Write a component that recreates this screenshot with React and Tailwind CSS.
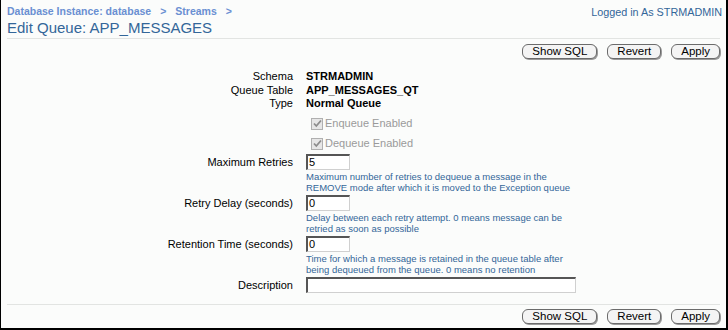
import React from 'react'

const FONT = { fontFamily: '"Liberation Sans", Arial, sans-serif' }

function Btn({ children }) {
  return (
    <button className="h-[15px] px-[9px] rounded-[6px] border border-[#6b6b6b] bg-[#f4f4f4] text-[11.5px] leading-[13px] text-black shadow-[1px_1px_0_#9a9a9a]">
      {children}
    </button>
  )
}

function Buttons() {
  return (
    <div className="flex justify-end gap-[10px] pr-[6px]">
      <Btn>Show SQL</Btn>
      <Btn>Revert</Btn>
      <Btn>Apply</Btn>
    </div>
  )
}

function Check({ label }) {
  return (
    <div className="flex items-center gap-[2px] h-[20px] pl-[5px]">
      <span className="w-[12px] h-[12px] border border-[#b0b0b0] bg-[#e6e6e6] flex items-center justify-center">
        <svg width="9" height="9" viewBox="0 0 9 9">
          <path d="M1 4.5 L3.3 7 L8 1.5" fill="none" stroke="#8c8c8c" strokeWidth="1.8" />
        </svg>
      </span>
      <span className="text-[11px] text-[#9a9a9a]">{label}</span>
    </div>
  )
}

function Input({ value, wide }) {
  return (
    <div
      className={`h-[16px] ${wide ? 'w-[270px]' : 'w-[44px]'} bg-white border-t-2 border-l-2 border-[#555] border-b border-r border-b-[#d0d0d0] border-r-[#d0d0d0] text-[11px] leading-[13px] pl-[1px] text-black`}
    >
      {value}
    </div>
  )
}

const FIELDS = [
  { label: 'Maximum Retries', value: '5', help: ['Maximum number of retries to dequeue a message in the', 'REMOVE mode after which it is moved to the Exception queue'] },
  { label: 'Retry Delay (seconds)', value: '0', help: ['Delay between each retry attempt. 0 means message can be', 'retried as soon as possible'] },
  { label: 'Retention Time (seconds)', value: '0', help: ['Time for which a message is retained in the queue table after', 'being dequeued from the queue. 0 means no retention'] },
]

export default function App() {
  return (
    <div style={FONT} className="w-[728px] h-[330px] bg-[#fbfcfb] border-l border-r-2 border-b-2 border-black flex flex-col overflow-hidden">
      {/* header */}
      <div className="flex justify-between items-start pl-[6px] pr-[4px] pt-[4px] h-[16px]">
        <div className="text-[10.5px] font-bold text-[#6a8fd2] flex gap-[9px]">
          <span>Database Instance: database</span>
          <span>&gt;</span>
          <span>Streams</span>
          <span>&gt;</span>
        </div>
        <div className="text-[10.8px] text-[#336699]">Logged in As STRMADMIN</div>
      </div>
      <div className="px-[6px] text-[15px] leading-[18px] text-[#336699] mt-[3px]">Edit Queue: APP_MESSAGES</div>
      <div className="mx-[6px] mt-[1px] border-t border-[#e2e4e2]" />
      <div className="mt-[5px]">
        <Buttons />
      </div>

      {/* form */}
      <div className="mt-[11px] grid grid-cols-[292px_1fr] gap-x-[13px] text-[11px] text-black">
        <div className="text-right leading-[13.5px]">Schema</div>
        <div className="font-bold leading-[13.5px]">STRMADMIN</div>
        <div className="text-right leading-[13.5px]">Queue Table</div>
        <div className="font-bold leading-[13.5px]">APP_MESSAGES_QT</div>
        <div className="text-right leading-[13.5px]">Type</div>
        <div className="font-bold leading-[13.5px]">Normal Queue</div>

        <div />
        <div className="mt-[3px]">
          <Check label="Enqueue Enabled" />
          <Check label="Dequeue Enabled" />
        </div>

        {FIELDS.map((f, i) => (
          <React.Fragment key={f.label}>
            <div className={`text-right leading-[16px] ${i === 0 ? 'mt-[0px]' : 'mt-[2px]'}`}>{f.label}</div>
            <div className={i === 0 ? 'mt-[0px]' : 'mt-[2px]'}>
              <Input value={f.value} />
              <div className="text-[9.5px] leading-[11px] text-[#336699] mt-[1px]">
                {f.help.map((h) => (
                  <div key={h}>{h}</div>
                ))}
              </div>
            </div>
          </React.Fragment>
        ))}

        <div className="text-right leading-[17px] mt-[2px]">Description</div>
        <div className="mt-[2px]">
          <Input value="" wide />
        </div>
      </div>

      <div className="mx-[6px] mt-[10px] border-t border-[#e2e4e2]" />
      <div className="mt-[4px]">
        <Buttons />
      </div>
    </div>
  )
}
